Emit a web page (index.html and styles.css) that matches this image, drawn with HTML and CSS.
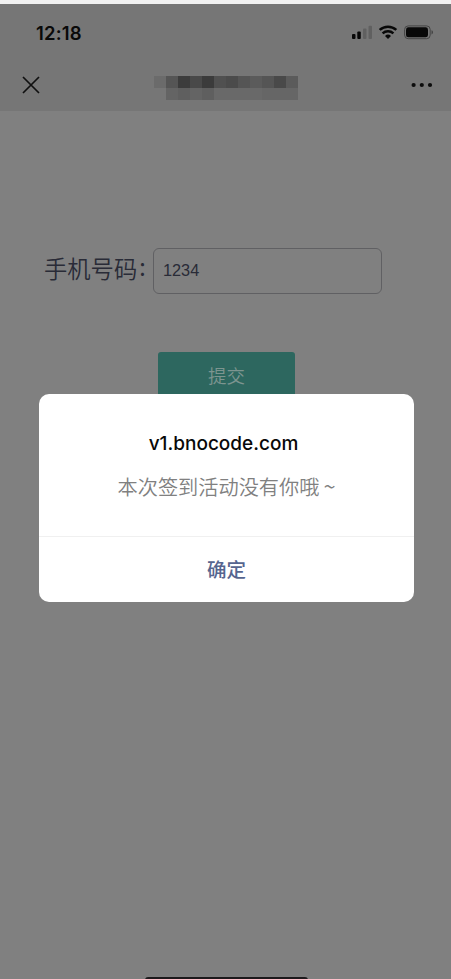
FILE: index.html
```html
<!DOCTYPE html>
<html lang="zh-CN">
<head>
<meta charset="utf-8">
<title>签到</title>
<link rel="stylesheet" href="styles.css">
</head>
<body>
<div class="phone">
  <header class="header">
    <div class="status">
      <span class="time">12:18</span>
      <svg class="indicators" width="82" height="16" viewBox="0 0 82 16">
        <rect x="0" y="9" width="3.5" height="5" rx="1"/>
        <rect x="5.3" y="6.5" width="3.5" height="7.5" rx="1"/>
        <rect class="faint" x="11" y="3.5" width="3.5" height="10.5" rx="1"/>
        <rect class="faint" x="16.5" y="0.7" width="3.5" height="13.3" rx="1"/>
        <g class="wave">
          <path d="M27.7 4.9a12.2 12.2 0 0 1 16.6 0"/>
          <path d="M30.6 8.3a8 8 0 0 1 10.8 0"/>
        </g>
        <path d="M33 10.9a4.4 4.4 0 0 1 6 0L36 14z"/>
        <rect class="shell" x="52.6" y="0.9" width="25.6" height="12.8" rx="3.6"/>
        <rect x="54" y="2.3" width="22" height="10" rx="2.4"/>
        <path class="cap" d="M79.5 5.2c2 .7 2 3.5 0 4.2z"/>
      </svg>
    </div>
    <div class="nav">
      <svg class="close" width="18" height="18" viewBox="0 0 18 18"><path d="M1 1l16 16M17 1L1 17"/></svg>
      <div class="mosaic">
        <i class="m1"></i><i class="m2"></i><i class="m3"></i><i class="m4"></i><i class="m5"></i><i class="m6"></i><i class="m7"></i><i class="m8"></i><i class="m9"></i><i class="m8"></i><i class="m4"></i><i class="m9"></i>
        <i></i><i class="n1"></i><i class="n2"></i><i class="n1"></i><i class="n2"></i><i class="n3"></i><i class="n3"></i><i class="n3"></i><i class="n3"></i><i class="n4"></i><i class="n4"></i><i class="n4"></i>
      </div>
      <svg class="more" width="22" height="6" viewBox="0 0 22 6"><circle cx="2.6" cy="3" r="2.1"/><circle cx="10.8" cy="3" r="2.1"/><circle cx="19" cy="3" r="2.1"/></svg>
    </div>
  </header>
  <main class="form">
    <div class="row">
      <label class="label" for="tel">手机号码<span class="colon">:</span></label>
      <input class="field" id="tel" type="text" value="1234">
    </div>
    <button class="submit">提交</button>
  </main>
  <div class="dialog">
    <div class="message">
      <div class="title">v1.bnocode.com</div>
      <div class="text">本次签到活动没有你哦<span class="tilde">~</span></div>
    </div>
    <div class="confirm">确定</div>
  </div>
  <div class="home"></div>
</div>
</body>
</html>
```
FILE: styles.css
```css
* { box-sizing: border-box; }
body { margin: 0; background: #f1f1f1; font-family: Inter, "Noto Sans CJK SC", sans-serif; }
.phone { position: relative; height: 979px; overflow: hidden; border-top: 4px solid #f1f1f1; background: #808080; }
.header { height: 107px; background: #767676; }
.status { display: flex; justify-content: space-between; align-items: center; height: 58px; padding: 0 17px 0 36px; }
.time { padding-top: 1px; font-size: 18.5px; font-weight: 600; line-height: 23px; letter-spacing: 0.2px; color: #090909; }
.indicators { fill: #080808; }
.indicators .faint { fill: #606060; }
.wave { fill: none; stroke: #080808; stroke-width: 2.5; }
.indicators .shell { fill: none; stroke: #444; stroke-width: 1; }
.indicators .cap { fill: #444; }
.nav { display: flex; align-items: center; height: 46px; padding: 0 18px 0 22px; }
.close { fill: none; stroke: #101010; stroke-width: 1.7; }
.mosaic { display: grid; grid-template-columns: repeat(12, 12px); grid-template-rows: 12px 12px; margin: 6px auto 0 114px; }
.m1 { background: #6b6b6b; }
.m2 { background: #555; }
.m3 { background: #3c3c3c; }
.m4 { background: #494949; }
.m5 { background: #3b3b3b; }
.m6 { background: #505050; }
.m7 { background: #4b4b4b; }
.m8 { background: #555; }
.m9 { background: #5b5b5b; }
.n1 { background: #646464; }
.n2 { background: #5f5f5f; }
.n3 { background: #696969; }
.n4 { background: #666; }
.more { fill: #0c0c0c; }
.form { display: flex; flex-direction: column; padding-top: 136px; }
.row { display: flex; align-items: center; height: 47px; padding-left: 44px; }
.label { display: flex; width: 109px; height: 38px; font-family: "Noto Sans CJK SC", sans-serif; font-size: 23.3px; font-weight: 350; line-height: 33px; color: #292b37; white-space: nowrap; }
.colon { margin-left: 2px; font-weight: 400; line-height: 29px; }
.field { width: 229px; height: 46px; padding: 0 9px; border: 1px solid #606063; border-radius: 6px; outline: 0; background: transparent; font-family: "Liberation Sans", sans-serif; font-size: 16.3px; color: #292b37; }
.submit { width: 137px; height: 48px; margin: 58px 0 0 158px; padding: 0 0 2px; border: 0; border-radius: 3px; background: #2d675f; font-family: "Noto Sans CJK SC", sans-serif; font-size: 18.5px; font-weight: 350; color: #7d9590; }
.dialog { position: absolute; top: 390px; left: 39px; width: 375px; height: 208px; border-radius: 10px; background: #fff; text-align: center; }
.message { height: 143px; padding-top: 37px; border-bottom: 1px solid #f0f0f0; }
.title { padding-right: 6px; font-size: 19px; font-weight: 500; line-height: 26px; color: #080808; }
.text { margin-top: 16px; font-family: "Noto Sans CJK SC", sans-serif; font-size: 20.2px; font-weight: 350; line-height: 28px; color: #808080; }
.tilde { margin-left: 4px; font-size: 22px; line-height: 1; }
.confirm { font-family: "Noto Sans CJK SC", sans-serif; font-size: 19.5px; font-weight: 500; line-height: 64px; color: #56658f; }
.home { position: absolute; bottom: -4px; left: 145px; width: 163px; height: 6px; border-radius: 3px; background: #1c1a1c; }
```
